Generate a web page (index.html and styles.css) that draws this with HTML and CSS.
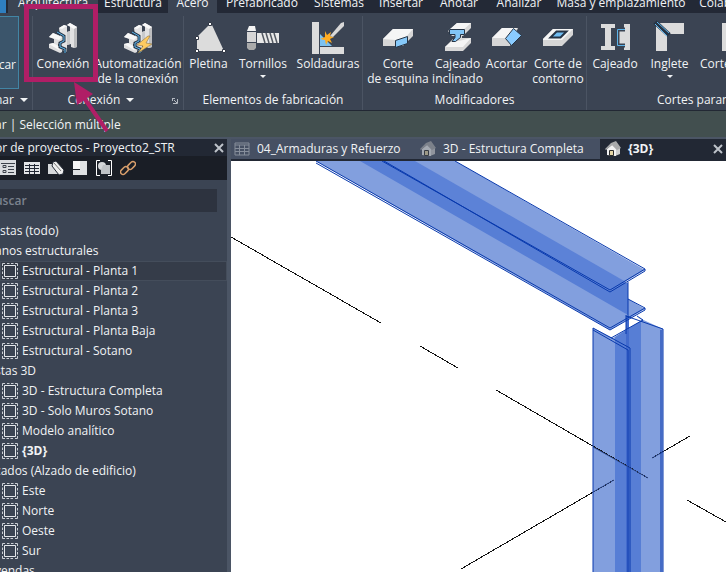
FILE: index.html
```
<!DOCTYPE html>
<html lang="es">
<head>
<meta charset="utf-8">
<title>Proyecto2_STR</title>
<link rel="stylesheet" href="styles.css">
</head>
<body>
<svg class="defs" aria-hidden="true">
  <symbol id="view" viewBox="0 0 16 16"><path d="M2.500 2.500h11v11h-11z" fill="none" stroke="#e4e7eb"/><path d="M.5 3V.5H3M5 .5h2.500M9 .5h2.500M13 .5h2.500V3M15.500 5v2.500M15.500 9v2.500M15.500 13v2.500H13M11 15.500H8.500M7 15.500H4.500M3 15.500H.5V13M.5 11V8.500M.5 7V4.500" fill="none" stroke="#ccd0d6"/></symbol>
  <symbol id="connection" viewBox="0 0 32 32"><path d="M12 6l5-3 3 1v6l3-1V4l-3-1 3-2 7 4v20l-3 1-3-1v-3l-4 1v7l-5-2z" fill="#e2e2e3"/><path d="M27 6l3-1v20l-3 1z" fill="#bdbec0"/><path d="M12 6l5-3 3 1-5 3zM20 3l3-2 7 4-3 2z" fill="#fafafa"/><path d="M20 10l3-1v13l-3 1z" fill="#c9cacc"/><path d="M2 15l4-4 5 2 4 2v5l-4 2v3l4 1v4l-2 1-11-5v-4l5-1v-4l-5-2z" fill="#dededf"/><path d="M2 15l4-4 9 4-3 3zM2 22l4-1 9 5-3 2z" fill="#f8f8f8"/><path d="M10 10l7 4v5l-4 2v4l5 2v4" fill="none" stroke="#263445" stroke-width="3"/><path d="M10 10l7 4v5l-4 2v4l5 2v4" fill="none" stroke="#5eb5eb"/></symbol>
  <symbol id="house" viewBox="0 0 16 16"><path d="M10 1l5 6v6l-5 2-7-1V8z" fill="#cdcdcd"/><path d="M2 8l5-4 4 4v7l-9-1z" fill="#f2f2f2"/><path d="M0 8l6-6 5-2 5 7-4 2-5-5-6 5z" fill="#a9aaab"/><path d="M4.500 9.500h4v5h-4z" fill="#e5d5a5" stroke="#2a2a2a"/></symbol>
  <symbol id="sheet" viewBox="0 0 16 14"><path d="M1 1h14v12H1zM1 3h14M1 6.500h14M1 9.500h14M5.500 3v10M10.500 3v10" fill="none" stroke="currentColor" stroke-width="1"/></symbol>
</svg>
<nav class="tabs">
  <span class="app"></span>
  <a href="#" class="w90 soft">Arquitectura</a><a href="#" class="w70">Estructura</a><a href="#" class="w49 on">Acero</a><a href="#" class="w90">Prefabricado</a><a href="#" class="w64">Sistemas</a><a href="#" class="w60">Insertar</a><a href="#" class="w56">Anotar</a><a href="#" class="w64">Analizar</a><a href="#" class="w140">Masa y emplazamiento</a><a href="#" class="w72">Colaborar</a>
</nav>
<header class="ribbon">
  <section class="group g1">
    <div class="tools"><button class="tool modify"><svg width="32" height="32"></svg>car</button></div>
    <h2 class="clip">nar <i class="caret"></i></h2>
  </section>
  <section class="group g2">
    <div class="tools">
      <button class="tool w60 marked"><svg width="32" height="32"><use href="#connection"/></svg>Conexión
        <svg class="marker" width="90" height="140" viewBox="0 0 90 140"><path d="M2.500 5.500h69v73h-69z" fill="none" stroke="#b01e66" stroke-width="5"/><path d="M83 130L58 94" stroke="#b01e66" stroke-width="4"/><path d="M50 81l19 12-16 11z" fill="#b01e66"/></svg></button>
      <button class="tool w90"><svg width="32" height="32"><use href="#connection"/><path d="M26 16l-11 9 6 1-5 7 14-9-6-1 4-7z" fill="#ffcb61" stroke="#8c7447" stroke-width=".6"/></svg>Automatización<br>de la conexión</button>
    </div>
    <h2>Conexión <i class="caret"></i><svg class="launcher" width="6" height="6" viewBox="0 0 6 6"><path d="M0 .5h3M.5 0v3M2 2l3 3M5.500 1v4.500H1" fill="none" stroke="#b5bac2"/></svg></h2>
  </section>
  <section class="group g3">
    <div class="tools">
      <button class="tool w49"><svg width="32" height="32"><path d="M4 17L16 5h3l12 26H4z" fill="#dcdcdc"/><path d="M15.500 2.500h3v3h-3zM2.500 16.500h3v3h-3zM2.500 29.500h3v3h-3zM29.500 29.500h3v3h-3z" fill="#fff" stroke="#303744"/></svg>Pletina</button>
      <button class="tool w60"><svg width="32" height="32"><path d="M0 11l2-5h6l1 5z" fill="#f4f4f4"/><path d="M0 12h9v10H0z" fill="#d6d6d6"/><path d="M0 23h9v5l-2 2H2l-2-2z" fill="#aaa"/><path d="M10 13h22v10H10z" fill="#e8e8e8"/><path d="M15 13l3 10M19 13l3 10M23 13l3 10M27 13l3 10" stroke="#525861" stroke-width="1.500"/></svg>Tornillos<i class="caret small"></i></button>
      <button class="tool w70"><svg width="32" height="34"><path d="M0 2h7v32H0zM8 27h24v7H8z" fill="#dcdcdc"/><path d="M8 14v12h12z" fill="#7bc2f2"/><path d="M13 11l2 4 4-3-1 4 4 1-4 2 2 4-4-2-2 4-1-5-5-1 5-2z" fill="#ffad22"/><path d="M18 16L29 3l3-1v4L21 17z" fill="#d8d8d8"/></svg>Soldaduras</button>
    </div>
    <h2>Elementos de fabricación</h2>
  </section>
  <section class="group g4">
    <div class="tools">
      <button class="tool w70"><svg width="32" height="32"><path d="M1 19l10-10h20v7L21 26H1z" fill="#d6d6d6"/><path d="M1 19l10-10h20l-8 9-9 2z" fill="#f5f5f5"/><path d="M13.500 20.500l12-4v7l-12 4z" fill="#86c9fa" stroke="#263445"/></svg>Corte<br>de esquina</button>
      <button class="tool w49"><svg width="32" height="32"><path d="M6 11l9-8h14v5l-8 8H10z" fill="#d7d7d7"/><path d="M7 10l8-7h14l-8 7z" fill="#f5f5f5"/><path d="M3 27l8-8h3v-5l6-3v7h9v5l-8 8H3z" fill="#d8d8d8"/><path d="M3 27l8-7 6 1 12-3-8 9z" fill="#f5f5f5"/><path d="M7.500 9.500h15v5h-4v3l-5 4H10l3-4v-3H7.500z" fill="#82c6f7" stroke="#263445"/></svg>Cajeado<br>inclinado</button>
      <button class="tool w49"><svg width="32" height="32"><path d="M1 18L11 8h16l-8 18H1z" fill="#d6d6d6"/><path d="M1 18L11 8h15l-8 10z" fill="#f5f5f5"/><path d="M22.500 8.500l8 7-10 10-6-7z" fill="#8acbff" stroke="#263445"/></svg>Acortar</button>
      <button class="tool w54"><svg width="32" height="32"><path d="M1 19L11 9h20v6L20 26H1z" fill="#d6d6d6"/><path d="M1 19L11 9h20L20 20H1z" fill="#f5f5f5"/><path d="M8.500 17.500l6-6h10l-6 6z" fill="#70bdf2" stroke="#263445" stroke-width="2"/></svg>Corte de<br>contorno</button>
    </div>
    <h2>Modificadores</h2>
  </section>
  <section class="group g5">
    <div class="tools">
      <button class="tool w56"><svg width="32" height="32"><path d="M2 4h14v4h-4v18h4v4H2v-4h4V8H2zM25 4h6v26h-6v-4h-6V9h6z" fill="#dcdcdc"/><path d="M26 9.500h-7.500v16H26" fill="none" stroke="#3b4453" stroke-width="4"/><path d="M26 9.500h-7.500v16H26" fill="none" stroke="#5eb5eb"/></svg>Cajeado</button>
      <button class="tool w49"><svg width="32" height="32"><path d="M2 3h28v11H13v17H2z" fill="#dcdcdc"/><path d="M1 2l14 13" stroke="#263445" stroke-width="5"/><path d="M3 2l12 11M1 4l12 12" stroke="#5eb5eb"/></svg>Inglete<i class="caret small"></i></button>
      <button class="tool w56"><svg width="32" height="32"><path d="M14 3h17v11h-6v17H14z" fill="#dcdcdc"/></svg>Corte de</button>
    </div>
    <h2>Cortes paramétricos</h2>
  </section>
</header>
<div class="options clip">ar | Selección múltiple</div>
<main class="work">
  <aside class="browser">
    <div class="title clip"><span>or de proyectos - Proyecto2_STR</span><button class="close" aria-label="Cerrar"><svg width="10" height="10" viewBox="0 0 10 10"><path d="M1 1l8 8M9 1L1 9"/></svg></button></div>
    <div class="icons">
      <svg width="16" height="16"><path d="M0 0h16v15H0z" fill="#d9dcdf"/><path d="M1 3.500h14M8 6.500h6M8 9.500h6M8 12.500h6M3 5.500h3v2H3zM3 10.500h3v2H3z" fill="none" stroke="#3c424b"/></svg>
      <svg width="16" height="16"><path d="M0 2h16v12H0z" fill="#e4e6e8"/><path d="M1 5.500h14M1 8.500h14M1 11.500h14M5.500 4v10M10.500 4v10" stroke="#222834"/></svg>
      <svg width="16" height="16"><path d="M0 4h7l8 10H0z" fill="#d7d9db"/><path d="M5 2l3-1 8 9-1 4-4 1-7-9z" fill="#eee" stroke="#222834"/><path d="M6 3l7 8" stroke="#777"/></svg>
      <svg width="16" height="16"><path d="M8 1h7v14H1v-5h7z" fill="#dfe1e3"/><path d="M1 1h7v8H1z" fill="#f5f5f5"/></svg>
      <svg width="16" height="16"><path d="M4 .5H.5v15H4M12 .5h3.500v15H12" fill="none" stroke="#fff"/><circle cx="6" cy="6" r="4" fill="#d5d7d9"/><path d="M7 5h7v9H5v-4z" fill="#bfc2c5"/></svg>
      <svg width="16" height="16"><g fill="none" stroke="#d99f6c" stroke-width="1.500"><rect x="0" y="8" width="9" height="5" rx="2.500" transform="rotate(-45 4.500 10.500)"/><rect x="7" y="3" width="9" height="5" rx="2.500" transform="rotate(-45 11.500 5.500)"/></g></svg>
    </div>
    <input class="search clip" type="text" aria-label="Buscar" placeholder="uscar">
    <ul class="tree">
      <li>stas (todo)</li>
      <li class="clip">anos estructurales</li>
      <li class="leaf sel"><svg><use href="#view"/></svg>Estructural - Planta 1</li>
      <li class="leaf"><svg><use href="#view"/></svg>Estructural - Planta 2</li>
      <li class="leaf"><svg><use href="#view"/></svg>Estructural - Planta 3</li>
      <li class="leaf"><svg><use href="#view"/></svg>Estructural - Planta Baja</li>
      <li class="leaf"><svg><use href="#view"/></svg>Estructural - Sotano</li>
      <li class="clip">stas 3D</li>
      <li class="leaf"><svg><use href="#view"/></svg>3D - Estructura Completa</li>
      <li class="leaf"><svg><use href="#view"/></svg>3D - Solo Muros Sotano</li>
      <li class="leaf"><svg><use href="#view"/></svg>Modelo analítico</li>
      <li class="leaf"><svg><use href="#view"/></svg><b>{3D}</b></li>
      <li class="clip">zados (Alzado de edificio)</li>
      <li class="leaf"><svg><use href="#view"/></svg>Este</li>
      <li class="leaf"><svg><use href="#view"/></svg>Norte</li>
      <li class="leaf"><svg><use href="#view"/></svg>Oeste</li>
      <li class="leaf"><svg><use href="#view"/></svg>Sur</li>
      <li class="clip">yendas</li>
    </ul>
  </aside>
  <section class="viewer">
    <nav class="docs">
      <a href="#" class="doc d1"><svg width="16" height="14"><use href="#sheet"/></svg>04_Armaduras y Refuerzo</a>
      <a href="#" class="doc d2"><svg class="dim" width="16" height="16"><use href="#house"/></svg>3D - Estructura Completa</a>
      <div class="doc d3"><svg width="16" height="16"><use href="#house"/></svg><b>{3D}</b><button class="close" aria-label="Cerrar vista"><svg width="10" height="10" viewBox="0 0 10 10"><path d="M1 1l8 8M9 1L1 9"/></svg></button></div>
    </nav>
    <svg class="model" viewBox="231 161 495 411" preserveAspectRatio="xMinYMin slice">
      <path d="M316 161L610 330L645 309L628 299V283H600L382 161z" fill="#829fde"/>
      <path d="M360 161L628 315V283H600L382 161z" fill="#577ed5"/>
      <path d="M382 161L610 291L645 270L455 161z" fill="#829fde"/>
      <path d="M415 161L626 282L610 291L382 161z" fill="#5c82d7"/>
      <path d="M593 328L613 338L642 320L637 317L663 329V572H593z" fill="#829fde"/>
      <path d="M615 337L641 321V572H615z" fill="#577ed5"/>
      <path d="M626 316h3v256h-3z" fill="#426bcd"/>
      <path d="M231 237L381 323M420 346L458 368M496 390L648 478M687 500L726 522M461 569L614 480M652 458L690 436" fill="none" stroke="#111" shape-rendering="crispEdges"/>
      <path d="M593 447L648 478M593 492L614 480M652 458L663 452" fill="none" stroke="#34549f"/>
      <g fill="none" stroke="#0839ad" stroke-width="1"><path d="M316 161L610 328L645 308L628 299M316 163L610 330L645 310V308M382 161L610 290L645 269L455 161M384 161L610 292L645 271V269M628 282V317M626 315V334M593 572V328L630 348V572M593 330L628 350V572M611 338L643 320L637 316M626 316L663 329V572M661 330V572"/></g>
    </svg>
  </section>
</main>
</body>
</html>
```
FILE: styles.css
```
* { box-sizing: border-box; }
body {
  margin: 0;
  height: 100vh;
  overflow: hidden;
  display: flex;
  flex-direction: column;
  background: #3b4453;
  color: #f1f3f5;
  font: 12px/16px "Open Sans", "Noto Sans", sans-serif;
}
.defs { position: absolute; width: 0; height: 0; }
a { color: inherit; text-decoration: none; }
button { padding: 0; border: 0; background: none; color: inherit; font: inherit; }
.clip { text-indent: -5px; }

.w49 { width: 49px; }
.w54 { width: 54px; }
.w56 { width: 56px; }
.w60 { width: 60px; }
.w64 { width: 64px; }
.w70 { width: 70px; }
.w72 { width: 72px; }
.w90 { width: 90px; }
.w140 { width: 140px; }

.tabs { display: flex; flex: none; height: 13px; overflow: hidden; background: #232936; }
.tabs a { flex: none; display: flex; align-items: flex-end; justify-content: center; height: 13px; line-height: 20px; white-space: nowrap; }
.tabs .on, .tabs .soft { background: #3b4453; }
.app { flex: none; width: 8px; border-right: 2px solid #232936; background: #2f7fc0; }

.ribbon { display: flex; flex: none; height: 98px; padding-top: 3px; border-bottom: 1px solid #222834; }
.group { position: relative; flex: none; display: flex; flex-direction: column; border-right: 1px solid #4b5463; }
.g1 { width: 33px; }
.g2 { width: 151px; }
.g3 { width: 179px; }
.g4 { width: 224px; }
.g5 { flex: 1; min-width: 0; border: 0; overflow: hidden; }
.tools { display: flex; height: 76px; }
.group h2 { display: flex; align-items: center; justify-content: center; gap: 6px; margin: 0; font-size: 12px; font-weight: 400; white-space: nowrap; }
.tool { position: relative; flex: none; display: flex; flex-direction: column; align-items: center; padding-top: 4px; line-height: 15px; white-space: nowrap; }
.tool > svg { flex: none; height: 36px; overflow: visible; }
.g1 .tools { height: 73px; margin-bottom: 3px; }
.modify { width: 19px; align-items: flex-end; padding-right: 2px; border: 1px solid #4285a5; border-left: 0; background: #3b556b; }
.group.g1 h2 { justify-content: flex-start; }
.g2 .tools { justify-content: flex-end; }
.group.g2 h2 { padding-right: 14px; }
.g3 .tools { justify-content: space-around; }
.g5 .tools { gap: 2px; }
.group.g5 h2 { justify-content: flex-start; padding-left: 70px; }
.caret { width: 0; height: 0; border: 4px solid transparent; border-top-color: currentColor; border-bottom: 0; }
.small { margin-top: 4px; border-width: 3px; border-bottom: 0; }
.launcher { position: absolute; right: 5px; bottom: 6px; }
.tool > .marker { position: absolute; z-index: 2; left: -9px; top: -15px; height: 140px; pointer-events: none; }

.options { flex: none; height: 28px; padding-top: 6px; border-bottom: 2px solid #4b5565; background: #424f4f; }

.work { flex: 1; display: flex; min-height: 0; }
.browser { flex: none; width: 231px; border-right: 4px solid #4b5565; overflow: hidden; }
.title { display: flex; align-items: center; justify-content: space-between; height: 17px; padding-right: 1px; background: #222834; white-space: nowrap; }
.close { display: flex; align-items: center; justify-content: center; width: 14px; height: 14px; }
.close path { fill: none; stroke: #bec3ca; stroke-width: 2; }
.icons { display: flex; align-items: center; gap: 8px; height: 24px; background: #1a1e26; }
.search { display: block; width: calc(100% - 10px); height: 23px; margin: 9px 0; padding: 0; border: 0; background: #2d333f; color: #fff; font: inherit; }
.search::placeholder { color: #7b828e; font-weight: 600; opacity: 1; }
.tree { margin: 0; padding: 0; list-style: none; line-height: 20px; white-space: nowrap; }
.tree li { display: flex; align-items: center; height: 20px; }
.tree .leaf { gap: 4px; padding-left: 2px; }
.tree .sel { background: #353c49; outline: 1px solid #444d5b; outline-offset: -1px; }
.tree svg { flex: none; width: 16px; height: 16px; }

.viewer { flex: 1; min-width: 0; display: flex; flex-direction: column; }
.docs { flex: none; display: flex; height: 22px; background: #222834; border-bottom: 2px solid #222834; }
.doc { display: flex; align-items: center; gap: 7px; padding-left: 3px; white-space: nowrap; }
.doc svg { flex: none; color: #868e9b; }
.d1, .d2 { background: #465063; }
.d1 { width: 186px; }
.d2 { width: 183px; }
.d3 { flex: 1; padding: 0 1px 0 5px; }
.d3 .close { margin-left: auto; }
.dim { opacity: .55; }
.model { flex: 1; min-height: 0; width: 100%; background: #fff; }
```
